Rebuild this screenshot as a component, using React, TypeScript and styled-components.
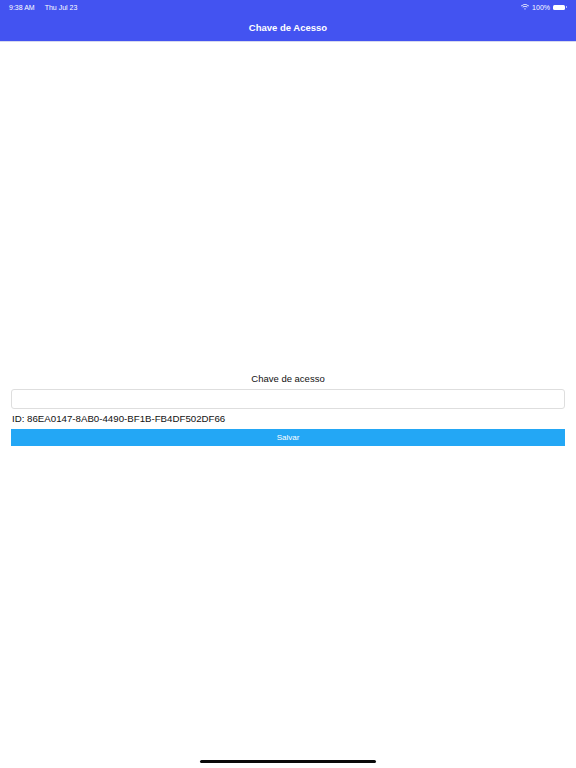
import React from 'react';
import styled, { createGlobalStyle } from 'styled-components';

const GlobalStyle = createGlobalStyle`
    html, body {
        margin: 0;
        padding: 0;
        background: #ffffff;
    }
    body {
        font-family: 'Liberation Sans', Arial, sans-serif;
    }
`;

const Screen = styled.div`
    width: 576px;
    height: 768px;
    display: flex;
    flex-direction: column;
    background: #ffffff;
    overflow: hidden;
`;

const Header = styled.header`
    height: 41px;
    background: #4353f1;
    border-bottom: 1px solid #d6d9ee;
    display: flex;
    flex-direction: column;
    color: #ffffff;
`;

const StatusBar = styled.div`
    height: 14px;
    padding: 0 9px;
    display: flex;
    align-items: center;
    justify-content: space-between;
    font-size: 7px;
    color: #ffffff;
`;

const StatusLeft = styled.div`
    display: flex;
    gap: 10px;
`;

const StatusRight = styled.div`
    display: flex;
    align-items: center;
    gap: 3px;
`;

const Battery = styled.div`
    display: flex;
    align-items: center;
    gap: 1px;
`;

const BatteryBody = styled.div`
    width: 12px;
    height: 5px;
    border-radius: 1.5px;
    background: #ffffff;
`;

const BatteryTip = styled.div`
    width: 1px;
    height: 2px;
    background: rgba(255, 255, 255, 0.6);
`;

const Title = styled.div`
    flex: 1;
    display: flex;
    align-items: center;
    justify-content: center;
    font-size: 9.5px;
    font-weight: 600;
`;

const Content = styled.main`
    flex: 1;
    display: flex;
    flex-direction: column;
    justify-content: center;
    padding: 20px 11px 4px;
`;

const Label = styled.div`
    text-align: center;
    font-size: 9.5px;
    color: #111111;
    margin-bottom: 5px;
`;

const Input = styled.input`
    box-sizing: border-box;
    width: 100%;
    height: 20px;
    border: 1px solid #dedede;
    border-radius: 3px;
    background: #ffffff;
    outline: none;
`;

const IdText = styled.div`
    font-size: 9.7px;
    color: #111111;
    margin: 4px 1px 4px;
    line-height: 12px;
`;

const Button = styled.button`
    width: 100%;
    height: 17px;
    border: none;
    background: #23a7f5;
    color: #ffffff;
    font-family: inherit;
    font-size: 8px;
    padding: 0;
`;

const HomeBar = styled.div`
    height: 8px;
    display: flex;
    justify-content: center;
    align-items: flex-start;
`;

const HomeIndicator = styled.div`
    width: 176px;
    height: 3px;
    border-radius: 2px;
    background: #0a0a0a;
`;

const Wifi = () => (
    <svg width="8" height="6" viewBox="0 0 16 12" fill="#ffffff">
        <path d="M8 2.2c2.6 0 5 1 6.8 2.7l1.2-1.3C13.9 1.6 11.1.4 8 .4S2.1 1.6 0 3.6l1.2 1.3C3 3.2 5.4 2.2 8 2.2z" />
        <path d="M8 5.6c1.6 0 3 .6 4.1 1.6l1.2-1.3C11.9 4.6 10 3.8 8 3.8S4.1 4.6 2.7 5.9l1.2 1.3C5 6.2 6.4 5.6 8 5.6z" />
        <path d="M8 8.8c.7 0 1.3.3 1.8.7L8 11.6 6.2 9.5c.5-.4 1.1-.7 1.8-.7z" />
    </svg>
);

export default function App() {
    return (
        <Screen>
            <GlobalStyle />
            <Header>
                <StatusBar>
                    <StatusLeft>
                        <span>9:38 AM</span>
                        <span>Thu Jul 23</span>
                    </StatusLeft>
                    <StatusRight>
                        <Wifi />
                        <span>100%</span>
                        <Battery>
                            <BatteryBody />
                            <BatteryTip />
                        </Battery>
                    </StatusRight>
                </StatusBar>
                <Title>Chave de Acesso</Title>
            </Header>
            <Content>
                <Label>Chave de acesso</Label>
                <Input />
                <IdText>ID: 86EA0147-8AB0-4490-BF1B-FB4DF502DF66</IdText>
                <Button>Salvar</Button>
            </Content>
            <HomeBar>
                <HomeIndicator />
            </HomeBar>
        </Screen>
    );
}
